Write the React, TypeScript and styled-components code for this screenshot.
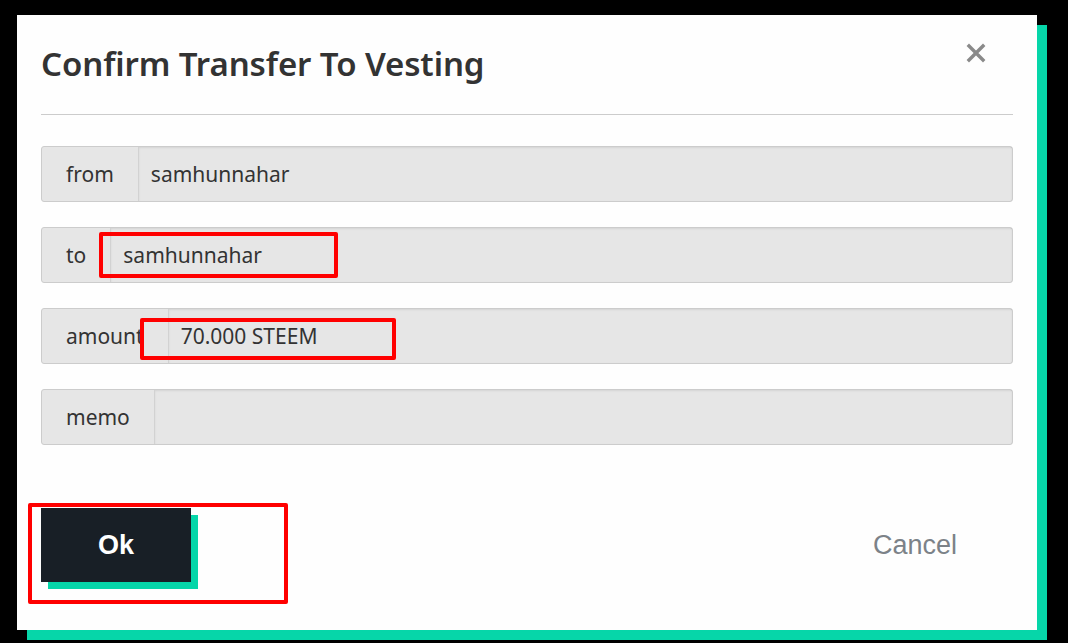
import styled, { createGlobalStyle } from "styled-components";

const GlobalStyle = createGlobalStyle`
  html, body {
    margin: 0;
    padding: 0;
    background: #000;
  }
  body {
    font-family: "Noto Sans", "Liberation Sans", sans-serif;
    overflow: hidden;
  }
`;

const fields = [
  { label: "from", value: "samhunnahar" },
  {
    label: "to",
    value: "samhunnahar",
    mark: { left: 57, top: 4, width: 239, height: 46 },
  },
  {
    label: "amount",
    value: "70.000 STEEM",
    mark: { left: 98, top: 9, width: 256, height: 42 },
  },
  { label: "memo", value: "" },
];

function App() {
  return (
    <Page>
      <GlobalStyle />
      <Modal>
        <Header>
          <Title>Confirm Transfer To Vesting</Title>
          <CloseButton aria-label="close">
            <svg width="20" height="20" viewBox="0 0 20 20">
              <path
                d="M3 3 L17 17 M17 3 L3 17"
                stroke="#8a8a8a"
                strokeWidth="3.4"
                strokeLinecap="square"
              />
            </svg>
          </CloseButton>
        </Header>
        <Fields>
          {fields.map((f) => (
            <InputGroup key={f.label}>
              <Label>{f.label}</Label>
              <Value>{f.value}</Value>
              {f.mark && <Marker style={f.mark} />}
            </InputGroup>
          ))}
        </Fields>
        <Footer>
          <OkWrap>
            <OkButton>Ok</OkButton>
            <OkMarker />
          </OkWrap>
          <CancelButton>Cancel</CancelButton>
        </Footer>
      </Modal>
    </Page>
  );
}

export default App;

const Page = styled.div`
  width: 1068px;
  height: 643px;
  background: #000;
  padding: 15px 0 0 17px;
  box-sizing: border-box;
  position: relative;
`;

const Modal = styled.div`
  width: 1020px;
  height: 615px;
  background: #fefefe;
  box-shadow: 10px 10px 0 #06d6a9;
  padding: 0 24px;
  box-sizing: border-box;
`;

const Header = styled.div`
  height: 100px;
  border-bottom: 1px solid #cccccc;
  display: flex;
  align-items: center;
  justify-content: space-between;
  box-sizing: border-box;
`;

const Title = styled.h2`
  margin: 0;
  font-size: 33px;
  font-weight: 600;
  color: #333333;
  letter-spacing: -0.1px;
  padding-bottom: 2px;
`;

const CloseButton = styled.button`
  background: transparent;
  border: none;
  padding: 0;
  margin: 0 26px 24px 0;
  width: 22px;
  height: 22px;
  display: flex;
  align-items: center;
  justify-content: center;
  cursor: pointer;
`;

const Fields = styled.div`
  display: flex;
  flex-direction: column;
  gap: 25px;
  padding-top: 31px;
`;

const InputGroup = styled.div`
  position: relative;
  display: flex;
  height: 56px;
  border: 1px solid #cccccc;
  border-radius: 3px;
  background: #e6e6e6;
  box-sizing: border-box;
  font-size: 21px;
  color: #333333;
`;

const Label = styled.span`
  display: flex;
  align-items: center;
  padding: 0 24px;
  border-right: 1px solid #d2d2d2;
`;

const Value = styled.div`
  flex: 1;
  display: flex;
  align-items: center;
  padding: 0 12px;
  box-shadow: inset 0 1px 2px rgba(0, 0, 0, 0.08);
`;

const Marker = styled.div`
  position: absolute;
  border: 4px solid #ff0000;
  border-radius: 2px;
  box-sizing: border-box;
  pointer-events: none;
`;

const Footer = styled.div`
  display: flex;
  align-items: center;
  justify-content: space-between;
  padding-top: 63px;
`;

const OkWrap = styled.div`
  position: relative;
`;

const OkButton = styled.button`
  width: 150px;
  height: 74px;
  background: #181f26;
  color: #ffffff;
  border: none;
  border-radius: 0;
  font-family: "Liberation Sans", Arial, sans-serif;
  font-weight: 700;
  font-size: 27px;
  box-shadow: 7px 7px 0 #06d6a9;
  cursor: pointer;
  display: block;
`;

const OkMarker = styled.div`
  position: absolute;
  left: -13px;
  top: -5px;
  width: 260px;
  height: 101px;
  border: 4px solid #ff0000;
  border-radius: 2px;
  box-sizing: border-box;
  pointer-events: none;
`;

const CancelButton = styled.button`
  background: transparent;
  border: none;
  font-family: "Liberation Sans", Arial, sans-serif;
  font-size: 27px;
  color: #7c8288;
  padding: 0;
  margin-right: 56px;
  cursor: pointer;
`;
